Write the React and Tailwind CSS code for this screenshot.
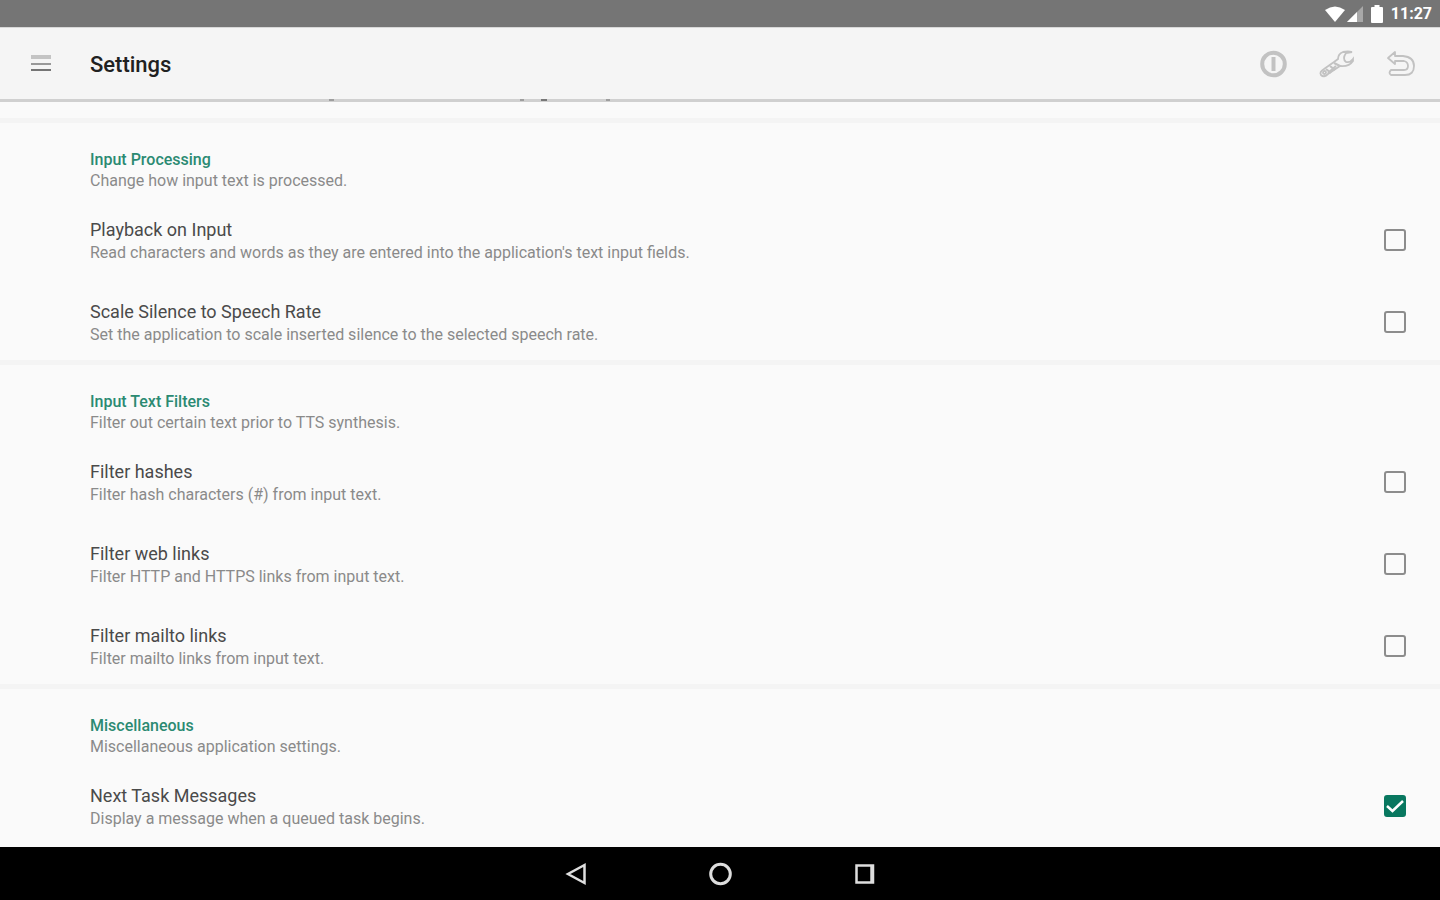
import React from "react";

const sections = [
	{
		id: "processing",
		title: "Input Processing",
		summary: "Change how input text is processed.",
		items: [
			{
				id: "playback",
				title: "Playback on Input",
				summary:
					"Read characters and words as they are entered into the application's text input fields.",
			},
			{
				id: "silence",
				title: "Scale Silence to Speech Rate",
				summary:
					"Set the application to scale inserted silence to the selected speech rate.",
			},
		],
	},
	{
		id: "filters",
		title: "Input Text Filters",
		summary: "Filter out certain text prior to TTS synthesis.",
		items: [
			{
				id: "hashes",
				title: "Filter hashes",
				summary: "Filter hash characters (#) from input text.",
			},
			{
				id: "web",
				title: "Filter web links",
				summary: "Filter HTTP and HTTPS links from input text.",
			},
			{
				id: "mailto",
				title: "Filter mailto links",
				summary: "Filter mailto links from input text.",
			},
		],
	},
	{
		id: "misc",
		title: "Miscellaneous",
		summary: "Miscellaneous application settings.",
		items: [
			{
				id: "next-task",
				title: "Next Task Messages",
				summary: "Display a message when a queued task begins.",
				checked: true,
			},
		],
	},
];

const StatusBar = () => (
	<div className="flex h-7 shrink-0 items-center justify-end border-b border-[#d8d8d8] bg-[#757575] pr-2 text-white">
		<svg className="h-4 w-5" viewBox="0 0 20 16" fill="currentColor" aria-hidden="true">
			<path d="M0 4Q10-3 20 4L10 16Z" />
		</svg>
		<svg className="ml-0.5 h-4 w-4" viewBox="0 0 16 16" aria-hidden="true">
			<path d="M16 0V16H0Z" fill="#a8a8a8" />
			<path d="M10 6V16H0Z" fill="#fff" />
		</svg>
		<svg className="ml-2 h-[18px] w-3" viewBox="0 0 12 18" fill="currentColor" aria-hidden="true">
			<path d="M3.500 0h5v2H11q1 0 1 1v14q0 1-1 1H1q-1 0-1-1V3q0-1 1-1h2.500Z" />
		</svg>
		<span className="ml-2 text-[16px] leading-5 font-bold">11:27</span>
	</div>
);

const AppBar = () => (
	<header className="relative flex h-[74px] shrink-0 items-center border-b-3 border-[#d0d0d0] bg-[#f5f5f5] pr-6 pl-[25px]">
		<button type="button" aria-label="Open menu" className="flex h-8 w-8 items-center justify-center">
			<svg className="h-5 w-5" viewBox="0 0 20 20" aria-hidden="true">
				<path d="M0 1h20v4H0Z" fill="#c4c4c4" />
				<path d="M0 9h20v2H0Z" fill="#999" />
				<path d="M0 15h20v2H0Z" fill="#757575" />
			</svg>
		</button>
		<h1 className="ml-[33px] pt-0.5 text-[22px] leading-7 font-medium text-[#212121]">Settings</h1>
		<div className="ml-auto flex items-center gap-8 text-[#c2c2c2]">
			<button type="button" aria-label="About" className="flex h-8 w-8 items-center justify-center">
				<svg className="h-8 w-8" viewBox="0 0 32 32" fill="none" stroke="currentColor" aria-hidden="true">
					<circle cx="17.500" cy="16" r="11.300" strokeWidth="4" />
					<path d="M17.500 9v14" strokeWidth="4" />
				</svg>
			</button>
			<button type="button" aria-label="Tools" className="flex h-8 w-8 items-center justify-center">
				<svg className="h-9 w-9 shrink-0" viewBox="0 0 36 36" fill="none" stroke="currentColor" strokeWidth="1.800" aria-hidden="true">
					<path d="M28 7L34 6Q30 5 25 6Q20 8 20 13L16 16L6 23Q1 26 3 29Q6 32 10 28L22 20Q31 21 35 15V13Q32 17 28 16Q24 13 28 7Z" />
					<path d="M8 23l5 4M12 20l5 4M16 17l6 3M10 27l8-7" strokeWidth="2.200" />
					<circle cx="6.500" cy="26.500" r="1.500" />
				</svg>
			</button>
			<button type="button" aria-label="Undo" className="flex h-8 w-8 items-center justify-center">
				<svg className="h-8 w-8" viewBox="0 0 32 32" fill="none" stroke="currentColor" strokeWidth="1.800" strokeLinejoin="round" aria-hidden="true">
					<path d="M4 10l7-6v4h8q11 1 11 10t-9 9H7q-3-2 0-5h13q4 0 4-4t-4-5h-9v3Z" />
				</svg>
			</button>
		</div>
		{/* descenders of the summary line that is scrolled under the bar */}
		<svg className="pointer-events-none absolute top-[71px] left-[328px] h-[3px] w-[284px]" viewBox="0 0 284 3" fill="none" aria-hidden="true">
			<path d="M1 1h5M192 1h4M278 1h4" stroke="#9e9e9e" strokeWidth="2" />
			<path d="M213 1h6" stroke="#777" strokeWidth="2" />
		</svg>
	</header>
);

const SettingRow = ({ item }) => (
	<label htmlFor={item.id} className="flex h-[76px] items-center justify-between pr-[34px] pl-[90px]">
		<span className="flex flex-col pt-0.5">
			<span className="text-[18px] leading-6 text-[#4a4a4a]">{item.title}</span>
			<span className="text-[16px] leading-[22px] text-[#8a8a8a]">{item.summary}</span>
		</span>
		<span className="relative flex h-[22px] w-[22px] shrink-0">
			<input
				id={item.id}
				type="checkbox"
				defaultChecked={item.checked}
				className="peer h-full w-full appearance-none rounded-[3px] border-2 border-[#8c8c8c] checked:border-[#08775f] checked:bg-[#08775f]"
			/>
			<svg
				className="pointer-events-none absolute inset-0 hidden h-full w-full peer-checked:block"
				viewBox="0 0 22 22"
				fill="none"
				stroke="#fff"
				strokeWidth="2.500"
				aria-hidden="true"
			>
				<path d="M3 11l5.500 5L19 6" />
			</svg>
		</span>
	</label>
);

const Section = ({ section }) => (
	<section className="border-t-5 border-[#f4f4f4]">
		<div className="h-[79px] pt-[26px] pl-[90px]">
			<h2 className="text-[16px] leading-[22px] font-medium text-[#2b8a72]">{section.title}</h2>
			<p className="text-[16px] leading-5 text-[#8a8a8a]">{section.summary}</p>
		</div>
		<div className="flex flex-col gap-1.5">
			{section.items.map((item) => (
				<SettingRow key={item.id} item={item} />
			))}
		</div>
	</section>
);

const NavBar = () => (
	<nav className="flex h-[53px] shrink-0 items-center justify-center gap-28 bg-black text-[#dedede]">
		<button type="button" aria-label="Back" className="flex h-8 w-8 items-center justify-center">
			<svg className="h-6 w-6" viewBox="0 0 24 24" fill="none" stroke="currentColor" strokeWidth="2.500" aria-hidden="true">
				<path d="M20.500 3v18L4 12Z" />
			</svg>
		</button>
		<button type="button" aria-label="Home" className="flex h-8 w-8 items-center justify-center">
			<svg className="h-6 w-6" viewBox="0 0 24 24" fill="none" stroke="currentColor" strokeWidth="3" aria-hidden="true">
				<circle cx="12.500" cy="12" r="9.800" />
			</svg>
		</button>
		<button type="button" aria-label="Recent apps" className="flex h-8 w-8 items-center justify-center">
			<svg className="h-6 w-6" viewBox="0 0 24 24" fill="none" stroke="currentColor" strokeWidth="2.500" aria-hidden="true">
				<path d="M4.500 3.500h16.500v17h-16.500Z" />
				<path d="M19.500 3v18" />
			</svg>
		</button>
	</nav>
);

export default function App() {
	return (
		<div className="flex h-screen flex-col bg-[#fafafa] font-['Roboto',sans-serif]">
			<StatusBar />
			<AppBar />
			<main className="min-h-0 flex-1 overflow-hidden pt-4">
				{sections.map((section) => (
					<Section key={section.id} section={section} />
				))}
			</main>
			<NavBar />
		</div>
	);
}
